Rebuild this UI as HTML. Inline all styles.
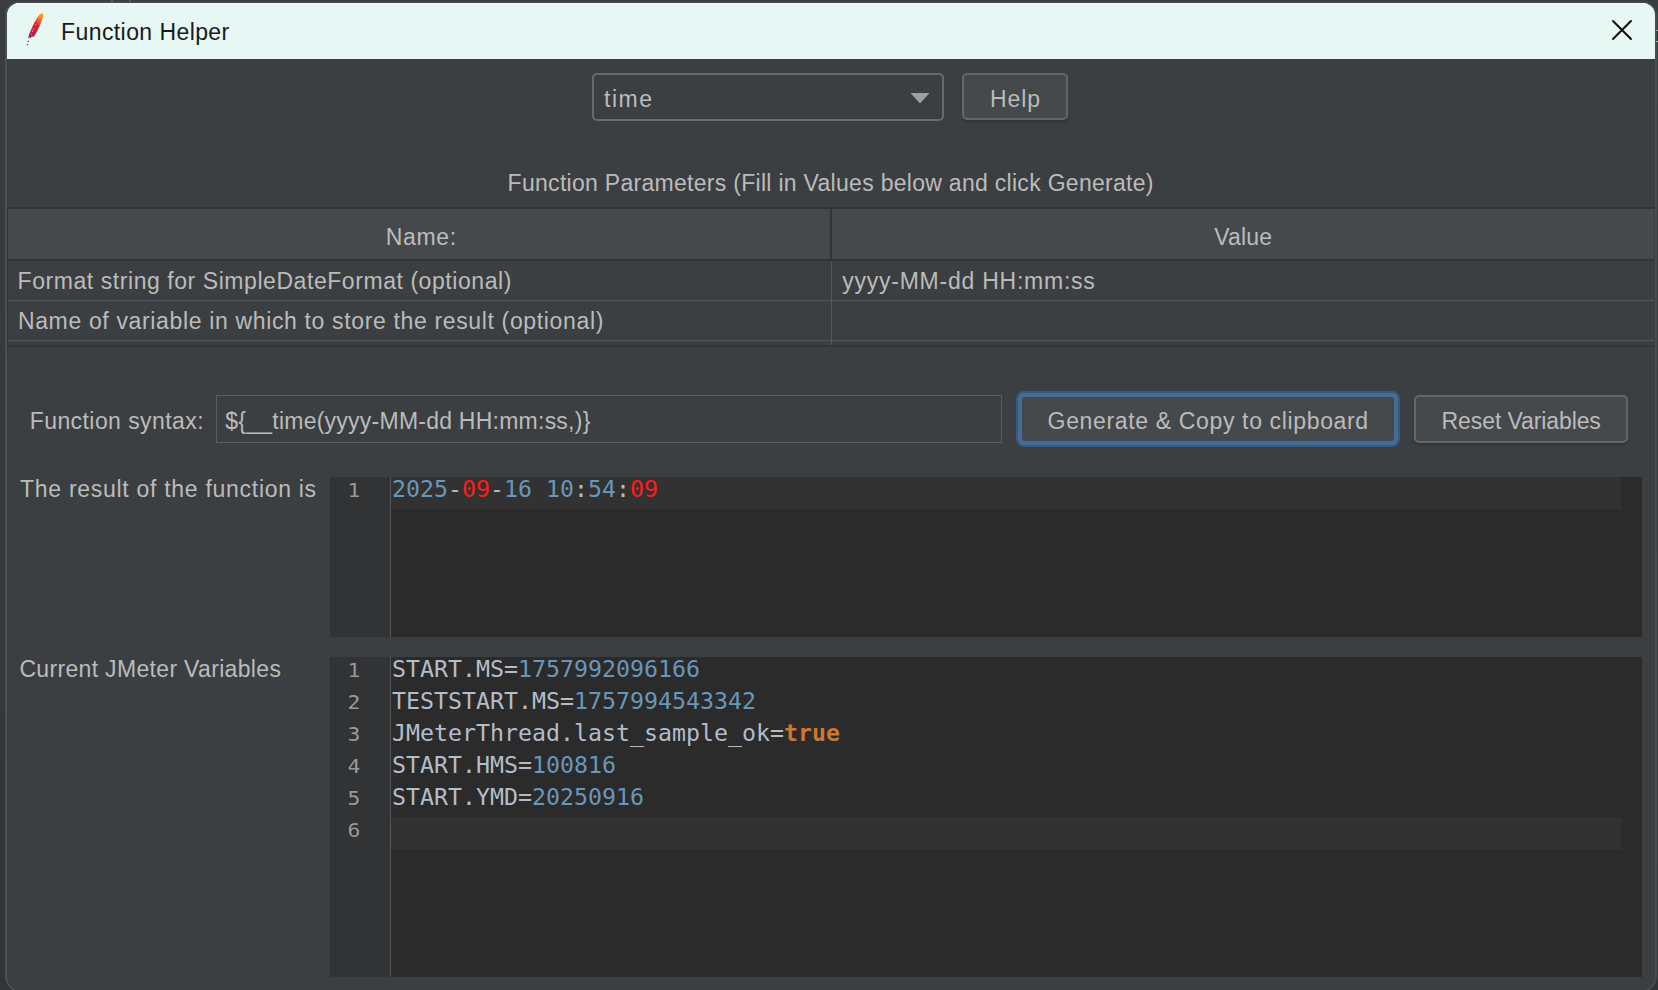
<!DOCTYPE html>
<html lang="en">
<head>
<meta charset="utf-8">
<title>Function Helper</title>
<style>
*{box-sizing:border-box;margin:0;padding:0}
html,body{width:1658px;height:990px;overflow:hidden;background:#343638}
body{background:linear-gradient(#3a3d3f 0,#37393b 40%,#323436 100%)}
body{position:relative;font-family:"Liberation Sans",sans-serif;font-size:23px;color:#bbbbbb;line-height:26px}
.abs{position:absolute}
.t{position:absolute;white-space:pre;line-height:26px;height:26px;margin-top:0}
#win{position:absolute;left:5px;top:1px;width:1652px;height:991px;border-style:solid;border-color:#424748 #494c4e #4d5052 #4d5052;border-width:2px 2px 1px 2px;border-radius:14px 14px 16px 16px;background:#3c3f41;overflow:hidden}
#g{position:absolute;left:-7px;top:-3px;width:1658px;height:990px}
#titlebar{position:absolute;left:7px;top:3px;width:1648px;height:56px;background:#e7f7f4;border-top:1px solid #f1fdfb}
#title{margin-top:0;left:61.0px;top:18px;font-size:23px;letter-spacing:0.42px;color:#1a1a1a;line-height:28px;height:28px}
.combo{position:absolute;left:592px;top:73px;width:352px;height:48px;border:2px solid #686b6d;border-radius:5px;background:#3c3f41}
.btn{position:absolute;border:2px solid #63676a;border-radius:5px;background:#45494b;box-shadow:0 2px 2px rgba(0,0,0,.18)}
.hdr{position:absolute;background:#45494b}
.mono{margin-top:-4px;font-family:"DejaVu Sans Mono","Liberation Mono",monospace;font-size:23.25px;line-height:32px;height:32px;position:absolute;white-space:pre;color:#b2bdc9}
.ln{margin-top:-3px;margin-left:-14.3px;transform:scaleX(1.12);text-align:center;font-family:"DejaVu Sans Mono","Liberation Mono",monospace;font-size:19px;line-height:32px;height:32px;position:absolute;color:#999999;width:40px}
.num{color:#6897bb}
.red{color:#ff1a1a}
.kw{color:#cc7832;font-weight:bold}
.editor{position:absolute;background:#2b2b2b}
.gutter{position:absolute;left:0;top:0;bottom:0;width:61px;background:#313335;border-right:1px solid #555555}
.curline{position:absolute;left:61px;height:32px;background:#323232}
</style>
</head>
<body>
<div id="win"><div id="g">
  <div id="titlebar"></div>
  <svg class="abs" style="left:25px;top:12px" width="24" height="38" viewBox="0 0 24 38">
    <defs>
      <linearGradient id="fg" x1="0.7" y1="0" x2="0.3" y2="1">
        <stop offset="0.05" stop-color="#f79a23"/>
        <stop offset="0.28" stop-color="#e8572b"/>
        <stop offset="0.45" stop-color="#d9232b"/>
        <stop offset="0.75" stop-color="#c5204c"/>
        <stop offset="1" stop-color="#8a2463"/>
      </linearGradient>
    </defs>
    <path d="M16.7 1.6 C18.4 1.8 18.6 3.4 18.0 5.2 C17.0 8.5 14.5 15 11.8 19.8 C10.8 21.6 9.8 23.4 8.9 24.8 L6.8 24.4 L5.3 26.3 L4.5 25.3 L3.4 27.2 C3.2 24 4.2 21.8 5.4 19.2 C6.8 15.6 8.6 12.4 10 9.6 C11.6 6.6 12.8 4.6 14 3.2 C15 2.2 15.9 1.5 16.7 1.6 Z" fill="url(#fg)"/>
    <circle cx="10.4" cy="12.4" r="0.45" fill="#f3d9dc"/>
    <circle cx="8.3" cy="17" r="0.5" fill="#f3d9dc"/>
    <circle cx="7.3" cy="19.2" r="0.5" fill="#f3d9dc"/>
    <circle cx="6.7" cy="22.5" r="0.45" fill="#f3d9dc"/>
    <circle cx="3.3" cy="29.4" r="0.65" fill="#3a2a3a"/>
    <circle cx="2.4" cy="32.7" r="0.65" fill="#3a2a3a"/>
  </svg>
  <span class="t" id="title">Function Helper</span>
  <svg class="abs" style="left:1610px;top:18px" width="24" height="24" viewBox="0 0 24 24"><path d="M3 3 L21 21 M21 3 L3 21" stroke="#0a0a0a" stroke-width="1.9" stroke-linecap="round" fill="none"/></svg>

  <!-- combo + help -->
  <div class="combo"></div>
  <span class="t" style="left:603.9px;top:86px;letter-spacing:1.6px">time</span>
  <svg class="abs" style="left:909px;top:92px" width="22" height="12" viewBox="0 0 22 12"><path d="M1.5 1 L20.5 1 L11 11.5 Z" fill="#9da0a2"/></svg>
  <div class="btn" style="left:962px;top:73px;width:106px;height:47px"></div>
  <span class="t" style="left:990.0px;top:86px;letter-spacing:0.9px">Help</span>

  <span class="t" style="left:507.6px;top:170px;letter-spacing:0.29px">Function Parameters (Fill in Values below and click Generate)</span>

  <!-- table -->
  <div class="abs" style="left:7px;top:207px;width:1648px;height:2px;background:#323537"></div>
  <div class="abs" style="left:7px;top:209px;width:1px;height:136px;background:#34373a"></div>
  <div class="hdr" style="left:8px;top:209px;width:1646px;height:50px"></div>
  <div class="abs" style="left:830px;top:209px;width:2px;height:50px;background:#323537"></div>
  <div class="abs" style="left:8px;top:259px;width:1646px;height:2px;background:#323537"></div>
  <div class="abs" style="left:8px;top:300px;width:1646px;height:1px;background:#55585a"></div>
  <div class="abs" style="left:8px;top:340px;width:1646px;height:1px;background:#55585a"></div>
  <div class="abs" style="left:831px;top:261px;width:1px;height:84px;background:#55585a"></div>
  <div class="abs" style="left:7px;top:345px;width:1648px;height:2px;background:#323537"></div>
  <span class="t" style="left:385.7px;top:224px;letter-spacing:0.68px">Name:</span>
  <span class="t" style="left:1214.2px;top:224px;letter-spacing:0.19px">Value</span>
  <span class="t" style="left:17.6px;top:268px;letter-spacing:0.56px">Format string for SimpleDateFormat (optional)</span>
  <span class="t" style="left:17.9px;top:308px;letter-spacing:0.65px">Name of variable in which to store the result (optional)</span>
  <span class="t" style="left:842.2px;top:268px;letter-spacing:0.76px">yyyy-MM-dd HH:mm:ss</span>

  <!-- function syntax row -->
  <span class="t" style="left:29.7px;top:408px;letter-spacing:0.43px">Function syntax:</span>
  <div class="abs" style="left:216px;top:395px;width:786px;height:48px;border:1px solid #5a5d5f;background:#3c3f41"></div>
  <span class="t" style="left:225.3px;top:408px;letter-spacing:0.24px">${__time(yyyy-MM-dd HH:mm:ss,)}</span>
  <div class="abs" style="left:1016px;top:391px;width:384px;height:56px;border-radius:8px;background:#395a7e"></div>
  <div class="abs" style="left:1018px;top:393px;width:380px;height:52px;border-radius:6px;background:#446c97"></div>
  <div class="abs" style="left:1022px;top:397px;width:372px;height:44px;border-radius:3px;background:#45494b"></div>
  <span class="t" style="left:1047.6px;top:408px;letter-spacing:0.65px">Generate &amp; Copy to clipboard</span>
  <div class="btn" style="left:1414px;top:395px;width:214px;height:48px"></div>
  <span class="t" style="left:1441.6px;top:408px;letter-spacing:-0.1px">Reset Variables</span>

  <!-- result -->
  <span class="t" style="left:20.1px;top:476px;letter-spacing:0.71px">The result of the function is</span>
  <div class="editor" style="left:330px;top:477px;width:1312px;height:160px">
    <div class="gutter"></div>
    <div class="curline" style="top:0;width:1231px"></div>
    <span class="ln" style="left:18px;top:0">1</span>
    <span class="mono" style="left:62px;top:0"><span class="num">2025</span>-<span class="red">09</span>-<span class="num">16</span> <span class="num">10</span>:<span class="num">54</span>:<span class="red">09</span></span>
  </div>

  <!-- variables -->
  <span class="t" style="left:19.4px;top:656px;letter-spacing:0.33px">Current JMeter Variables</span>
  <div class="editor" style="left:330px;top:657px;width:1312px;height:320px">
    <div class="gutter"></div>
    <div class="curline" style="top:160px;width:1231px"></div>
    <span class="ln" style="left:18px;top:0">1</span>
    <span class="ln" style="left:18px;top:32px">2</span>
    <span class="ln" style="left:18px;top:64px">3</span>
    <span class="ln" style="left:18px;top:96px">4</span>
    <span class="ln" style="left:18px;top:128px">5</span>
    <span class="ln" style="left:18px;top:160px">6</span>
    <span class="mono" style="left:62px;top:0">START.MS=<span class="num">1757992096166</span></span>
    <span class="mono" style="left:62px;top:32px">TESTSTART.MS=<span class="num">1757994543342</span></span>
    <span class="mono" style="left:62px;top:64px">JMeterThread.last_sample_ok=<span class="kw">true</span></span>
    <span class="mono" style="left:62px;top:96px">START.HMS=<span class="num">100816</span></span>
    <span class="mono" style="left:62px;top:128px">START.YMD=<span class="num">20250916</span></span>
  </div>

</div></div>
<div class="abs" style="left:111px;top:0;width:2px;height:2px;background:#565b5c"></div>
<div class="abs" style="left:129px;top:0;width:2px;height:2px;background:#565b5c"></div>
<div class="abs" style="left:1656px;top:30px;width:2px;height:1px;background:#9c9ea0"></div>
<div class="abs" style="left:1657px;top:31px;width:1px;height:10px;background:#2e323a"></div>
<div class="abs" style="left:1656px;top:41px;width:2px;height:1px;background:#b0b2b3"></div>
</body>
</html>
